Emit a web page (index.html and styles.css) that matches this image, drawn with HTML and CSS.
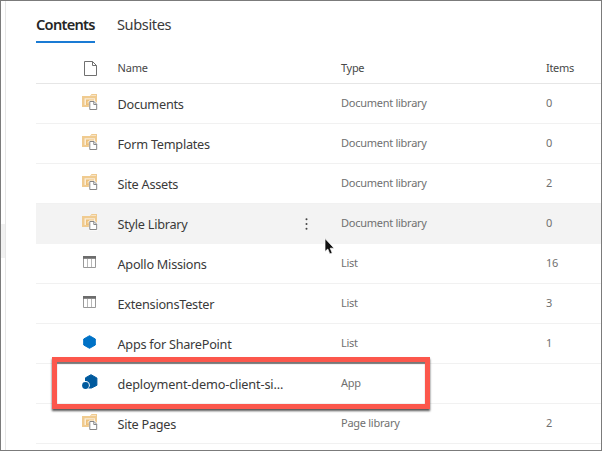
FILE: index.html
```html
<!DOCTYPE html>
<html lang="en">
<head>
<meta charset="utf-8">
<title>Site contents</title>
<link rel="stylesheet" href="styles.css">
</head>
<body>
<svg class="defs" width="0" height="0" aria-hidden="true">
  <symbol id="library" viewBox="0 0 16 17">
    <path fill="#f0cb90" d="M0 2h8l1.500-2H15v13H0z"/>
    <path fill="#fff" d="M9.500 1.200H14v.8H9zM2.500 4.200H13v6.800H2.500z" opacity=".65"/>
    <path fill="#ecbf78" d="M4 5.500h8V11H4z"/>
    <path fill="none" stroke="#fae6c3" d="M6 9.500v-2h4"/>
    <path fill="#fff" stroke="#fff" stroke-width="2.200" d="M8 7.500h4l2.700 2.700v5.300H8z"/>
    <path fill="#fff" stroke="#858585" d="M7.800 7.500H12l2.700 2.700v5.300H7.800zM11.800 7.500v3h2.900"/>
  </symbol>
  <symbol id="list" viewBox="0 0 13 12">
    <path fill="#fff" stroke="#999" d="M.5.500h12v11H.5z"/>
    <path fill="#6c6c6c" d="M0 0h13v2.800H0z"/>
    <path stroke="#b8b8b8" d="M4.500 3v8M8.500 3v8"/>
  </symbol>
  <symbol id="addin" viewBox="0 0 13 14">
    <path fill="#0072c6" stroke="#0072c6" stroke-linejoin="round" d="M6.500.700 12.300 4v6l-5.800 3.300L.7 10V4z"/>
  </symbol>
  <symbol id="app" viewBox="0 0 16 16">
    <path fill="#005a9e" stroke="#005a9e" stroke-linejoin="round" d="m9 .700 5.900 3.300v7.300L9.500 14H6L3.500 8V3.800z"/>
    <circle cx="3.600" cy="11.300" r="4.200" fill="#fff"/>
    <circle cx="3.500" cy="11.500" r="3.400" fill="#005a9e"/>
  </symbol>
</svg>
<div class="window">
  <aside class="rail"><div class="rail-item"></div></aside>
  <main class="content">
    <nav class="tabs"><a class="tab active">Contents</a><a class="tab">Subsites</a></nav>
    <section class="table">
      <div class="row head">
        <svg class="icon" width="13" height="15" viewBox="0 0 13 15"><path fill="#fff" stroke="#707070" d="M.5.500h8l4 4v10H.5zM8.500.500v4h4"/></svg>
        <span class="name">Name</span><span></span><span class="meta">Type</span><span class="meta">Items</span>
      </div>
      <div class="row"><svg class="icon" width="16" height="17"><use href="#library"/></svg><span class="name">Documents</span><span></span><span class="meta">Document library</span><span class="meta">0</span></div>
      <div class="row"><svg class="icon" width="16" height="17"><use href="#library"/></svg><span class="name">Form Templates</span><span></span><span class="meta">Document library</span><span class="meta">0</span></div>
      <div class="row"><svg class="icon" width="16" height="17"><use href="#library"/></svg><span class="name">Site Assets</span><span></span><span class="meta">Document library</span><span class="meta">2</span></div>
      <div class="row hover"><svg class="icon" width="16" height="17"><use href="#library"/></svg><span class="name">Style Library</span>
        <svg class="more" width="3" height="12" viewBox="0 0 3 12"><g fill="#444"><circle cx="1.500" cy="1.300" r="1"/><circle cx="1.500" cy="6" r="1"/><circle cx="1.500" cy="10.700" r="1"/></g></svg>
        <span class="meta">Document library</span><span class="meta">0</span></div>
      <div class="row"><svg class="icon list" width="13" height="12"><use href="#list"/></svg><span class="name">Apollo Missions</span><span></span><span class="meta">List</span><span class="meta">16</span></div>
      <div class="row"><svg class="icon list" width="13" height="12"><use href="#list"/></svg><span class="name">ExtensionsTester</span><span></span><span class="meta">List</span><span class="meta">3</span></div>
      <div class="row"><svg class="icon addin" width="13" height="14"><use href="#addin"/></svg><span class="name">Apps for SharePoint</span><span></span><span class="meta">List</span><span class="meta">1</span></div>
      <div class="row"><svg class="icon" width="16" height="16"><use href="#app"/></svg><span class="name long">deployment-demo-client-si...</span><span></span><span class="meta">App</span><span class="meta"></span></div>
      <div class="row"><svg class="icon" width="16" height="17"><use href="#library"/></svg><span class="name">Site Pages</span><span></span><span class="meta">Page library</span><span class="meta">2</span></div>
    </section>
  </main>
  <div class="callout"></div>
  <svg class="cursor" width="11" height="17" viewBox="0 0 11 17"><path fill="#111" stroke="#fff" stroke-width=".7" d="M1 .500v13l2.800-2.500 2 4.900 2.400-1-2-4.700h3.900z"/></svg>
</div>
</body>
</html>
```
FILE: styles.css
```css
* { box-sizing: border-box; }
body {
  margin: 0;
  font-family: "Noto Sans", "Open Sans", sans-serif;
  color: #3a3a3a;
  background: #fff;
}
.defs { position: absolute; }
.window {
  position: relative;
  display: flex;
  width: 602px;
  height: 451px;
  border: 1px solid #7b7b7b;
  overflow: hidden;
}
.rail {
  width: 5px;
  padding-top: 223px;
  border-right: 1px solid #e6e6e6;
}
.rail-item { height: 34px; background: #f1f1f1; }
.content { flex: 1; padding-left: 30px; }
.tabs { display: flex; gap: 22px; height: 52px; padding-top: 9px; }
.tab {
  height: 33px;
  font-size: 14.6px;
  line-height: 28px;
  letter-spacing: -0.4px;
  white-space: nowrap;
}
.active {
  width: 59px;
  font-weight: 600;
  letter-spacing: -0.72px;
  color: #262626;
  border-bottom: 2px solid #1a7bd4;
}
.row {
  display: grid;
  grid-template-columns: 81.5px 187.5px 36px 205px 1fr;
  align-items: center;
  height: 40px;
  border-bottom: 1px solid #f1f1f1;
  line-height: 20px;
  white-space: nowrap;
}
.head { height: 31px; border-color: #e6e6e6; }
.icon { margin: -3px 0 0 46px; }
.head .icon { margin: 0 0 0 48px; }
.icon.list { margin-left: 47px; }
.icon.addin { margin-left: 47px; }
.name { margin-top: 1px; font-size: 12.7px; letter-spacing: -0.25px; }
.long { letter-spacing: -0.15px; }
.meta { font-size: 11px; letter-spacing: -0.27px; color: #707070; margin-top: -2px; }
.head .name, .head .meta { font-size: 11px; letter-spacing: -0.3px; color: #484848; margin: 0; }
.head .name { letter-spacing: -0.15px; }
.hover { background: #f3f3f3; border-color: #f3f3f3; }
.more { justify-self: start; }
.callout {
  position: absolute;
  left: 51px;
  top: 356px;
  width: 378px;
  height: 52px;
  border: 5px solid #fc574c;
  box-shadow: 0 2px 2px #555, inset 0 2px 1px #777;
}
.cursor { position: absolute; left: 323px; top: 237px; }
```
